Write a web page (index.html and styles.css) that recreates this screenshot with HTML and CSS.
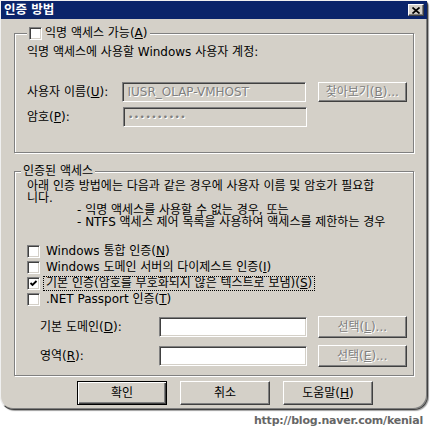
FILE: index.html
```html
<!DOCTYPE html>
<html lang="ko">
<head>
  <meta charset="utf-8">
  <title>인증 방법</title>
  <link rel="stylesheet" href="styles.css">
</head>
<body>

  <div class="dialog">
    <!-- title bar -->
    <div class="titlebar">
      <span class="title">인증 방법</span>
      <span class="close" aria-label="닫기">
        <svg width="8" height="7" viewBox="0 0 8 7"><path d="M0.5 0.5 L7.5 6.5 M7.5 0.5 L0.5 6.5" stroke="#000" stroke-width="1.7"/></svg>
      </span>
    </div>

    <div class="content">
      <!-- anonymous access -->
      <fieldset class="group anon">
        <legend><span class="box"></span><span class="cap">익명 액세스 가능(<u>A</u>)</span></legend>
        <p class="note">익명 액세스에 사용할 Windows 사용자 계정:</p>
        <div class="row user">
          <span class="lbl">사용자 이름(<u>U</u>):</span>
          <span class="input off">IUSR_OLAP-VMHOST</span>
          <span class="btn off">찾아보기(<u>B</u>)...</span>
        </div>
        <div class="row pass">
          <span class="lbl">암호(<u>P</u>):</span>
          <span class="input off dots">••••••••••</span>
        </div>
      </fieldset>

      <!-- authenticated access -->
      <fieldset class="group auth">
        <legend>인증된 액세스</legend>
        <p class="para">
          <span>아래 인증 방법에는 다음과 같은 경우에 사용자 이름 및 암호가 필요합</span>
          <span>니다.</span>
        </p>
        <ul class="cases">
          <li>- 익명 액세스를 사용할 수 없는 경우, 또는</li>
          <li>- NTFS 액세스 제어 목록을 사용하여 액세스를 제한하는 경우</li>
        </ul>
        <div class="checks">
          <div class="check"><span class="box"></span><span class="cap">Windows 통합 인증(<u>N</u>)</span></div>
          <div class="check"><span class="box"></span><span class="cap">Windows 도메인 서버의 다이제스트 인증(<u>I</u>)</span></div>
          <div class="check"><span class="box on"><svg width="9" height="9" viewBox="0 0 9 9"><path d="M1.5 4 L3.5 6 L7.5 2" fill="none" stroke="#000" stroke-width="1.8"/></svg></span><span class="cap focus">기본 인증(암호를 부호화되지 않은 텍스트로 보냄)(<u>S</u>)</span></div>
          <div class="check"><span class="box"></span><span class="cap">.NET Passport 인증(<u>T</u>)</span></div>
        </div>
        <div class="row domain">
          <span class="lbl">기본 도메인(<u>D</u>):</span>
          <span class="input"></span>
          <span class="btn off">선택(<u>L</u>)...</span>
        </div>
        <div class="row domain">
          <span class="lbl">영역(<u>R</u>):</span>
          <span class="input"></span>
          <span class="btn off">선택(<u>E</u>)...</span>
        </div>
      </fieldset>

      <div class="actions">
        <span class="btn default">확인</span>
        <span class="btn">취소</span>
        <span class="btn">도움말(<u>H</u>)</span>
      </div>
    </div>
  </div>

  <div class="mark">http://blog.naver.com/kenial</div>

</body>
</html>
```

FILE: styles.css
```css
/* RESET */
* { box-sizing:border-box; margin:0; padding:0; }
html, body { background:#fff; }
body {
  width:430px; height:435px; overflow:hidden;
  font:12px/14px "DejaVu Sans", "Noto Sans CJK KR", sans-serif; color:#000;
}
u { text-decoration:underline; text-underline-offset:1px; }

/* WINDOW */
.dialog {
  width:428px; height:410px; background:#d4d0c8;
  border:1px solid; border-color:#f0f0f0 #404040 #404040 #f0f0f0;
  border-radius:0 5px 14px 14px;
  box-shadow:inset -1px -1px #808080, 1px 1px 1px #a0a0a0;
}
.titlebar {
  height:18px; background:#0a246a;
  display:flex; align-items:center; justify-content:space-between;
  padding:0 3px;
}
.title { color:#fff; font-weight:bold; font-size:12.5px; }
.close {
  width:16px; height:12px; background:#d4d0c8;
  border:1px solid; border-color:#fff #404040 #404040 #fff;
  box-shadow:inset -1px -1px #808080;
  display:flex; align-items:center; justify-content:center;
}

.content { padding:7px 13px 0; }

/* GROUP BOXES */
.group {
  border:1px solid #808080; min-width:0;
  box-shadow:inset 1px 1px #fff, 1px 1px #fff;
  padding:0 6px 0 12px;
}
.group legend { padding:0 2px; line-height:14px; background:#d4d0c8; display:flex; align-items:center; }
.auth legend { margin-left:-6px; }
.anon { height:127px; }
.auth { height:212px; margin-top:11px; }

.note { margin-top:5px; }

/* FIELD ROWS */
.row { display:flex; align-items:center; height:20px; }
.user { margin-top:23px; }
.pass { margin-top:5px; }
.lbl { width:96px; }
.row .input { width:184px; }
.row .btn { margin-left:12px; }

.domain { margin:9px 0 0 13px; height:22px; }
.domain + .domain { margin-top:7px; }
.domain .lbl { width:120px; }
.domain .input { width:148px; }
.domain .btn { margin-left:11px; height:22px; }

.input {
  height:20px; background:#fff; padding:0 4px;
  border:1px solid; border-color:#808080 #fff #fff #808080;
  box-shadow:inset 1px 1px #404040, inset -1px -1px #d4d0c8;
  display:flex; align-items:center; white-space:nowrap;
}
.input.off { background:#d4d0c8; color:#808080; }
.dots { font-size:9px; letter-spacing:.5px; }

/* BUTTONS */
.btn {
  width:90px; height:20px;
  border:1px solid; border-color:#fff #404040 #404040 #fff;
  box-shadow:inset -1px -1px #808080;
  display:flex; align-items:center; justify-content:center;
}
.off { color:#808080; text-shadow:1px 1px #fff; }
.btn.default {
  border-color:#000;
  box-shadow:inset 1px 1px #fff, inset -1px -1px #404040, inset -2px -2px #808080;
}
.actions {
  display:flex; gap:13px; margin:5px 0 0 63px;
}
.actions .btn { height:24px; }

/* AUTH TEXT */
.para { margin-top:2px; white-space:nowrap; }
.para span, .cases li { display:block; height:12px; line-height:12px; }
.cases { list-style:none; margin-left:50px; white-space:nowrap; }

/* CHECKBOXES */
.box {
  width:13px; height:13px; background:#fff; flex:none;
  border:1px solid; border-color:#808080 #fff #fff #808080;
  box-shadow:inset 1px 1px #404040, inset -1px -1px #d4d0c8;
  display:flex; align-items:center; justify-content:center;
}
.box svg { display:block; }
.anon .cap { margin-left:3px; }
.checks { margin-top:15px; }
.check { display:flex; align-items:center; height:16px; white-space:nowrap; }
.check .cap { margin-left:3px; padding:0 2px; border:1px solid transparent; line-height:13px; }
.check .focus { border:1px dotted #000; }

/* WATERMARK */
.mark {
  margin-top:5px; padding-right:7px; text-align:right;
  font:bold 11px/12px "DejaVu Sans", sans-serif; color:#666;
  letter-spacing:-.2px;
}
```
